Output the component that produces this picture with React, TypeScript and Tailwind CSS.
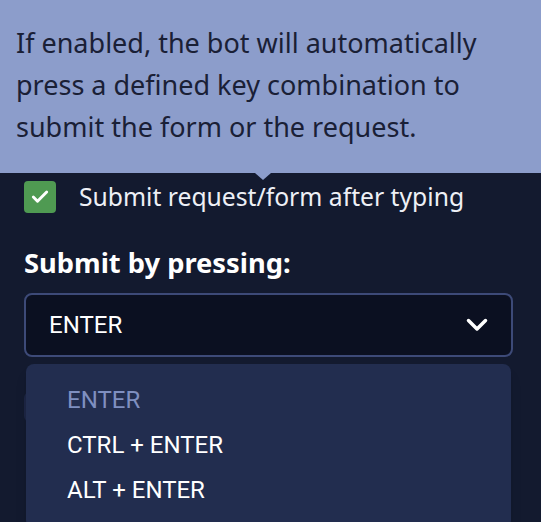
import { Check } from "lucide-react";

const options = ["ENTER", "CTRL + ENTER", "ALT + ENTER"];

export default function App() {
  const selected = "ENTER";

  return (
    <div className="relative h-[522px] w-[541px] overflow-hidden bg-[#131a2f] font-['Noto_Sans',sans-serif]">
      {/* settings panel */}
      <div className="flex flex-col pl-6 pr-7 pt-[181px]">
        <label className="flex items-center gap-[23px]">
          <span className="flex h-8 w-8 items-center justify-center rounded-[4px] bg-[#4f9a52]">
            <Check className="h-5 w-5 text-white" strokeWidth={3.5} />
          </span>
          <span className="text-[24.7px] leading-8 text-[#eef0f6]">
            Submit request/form after typing
          </span>
        </label>

        <div className="mt-[34px] text-[27.3px] font-bold leading-8 text-white">
          Submit by pressing:
        </div>

        <div className="mt-[14px] flex h-16 items-center justify-between rounded-lg border-2 border-[#3d4a78] bg-[#0b1021] pl-[23px] pr-[23px]">
          <span className="font-['Roboto',sans-serif] text-[24px] text-white">
            {selected}
          </span>
          <svg width="22" height="14" viewBox="0 0 22 14" fill="none">
            <polyline
              points="2.5,2.5 11,11 19.5,2.5"
              stroke="white"
              strokeWidth="3.5"
              strokeLinecap="round"
              strokeLinejoin="round"
            />
          </svg>
        </div>

        <div className="mt-[35px] h-[30px] w-24 rounded-md bg-[#1d2644]" />
      </div>

      {/* dropdown menu */}
      <div className="absolute left-[26px] top-[364px] w-[485px] rounded-lg bg-[#222d4f] pb-4 pt-[13px] shadow-lg">
        {options.map((opt) => (
          <div
            key={opt}
            className={
              "flex h-[45px] items-center pl-[41px] font-['Roboto',sans-serif] text-[24px] " +
              (opt === selected ? "text-[#7f8fc0]" : "text-white")
            }
          >
            {opt}
          </div>
        ))}
      </div>

      {/* tooltip */}
      <div className="absolute left-0 top-0 w-full">
        <div className="h-[173px] bg-[#8c9dcb] px-4 pt-[22px] text-[27px] leading-[42px] text-[#1a2036]">
          If enabled, the bot will automatically press a defined key combination to submit the form or the request.
        </div>
        <div className="ml-[255px] h-0 w-0 border-x-8 border-t-[7px] border-x-transparent border-t-[#8c9dcb]" />
      </div>
    </div>
  );
}
